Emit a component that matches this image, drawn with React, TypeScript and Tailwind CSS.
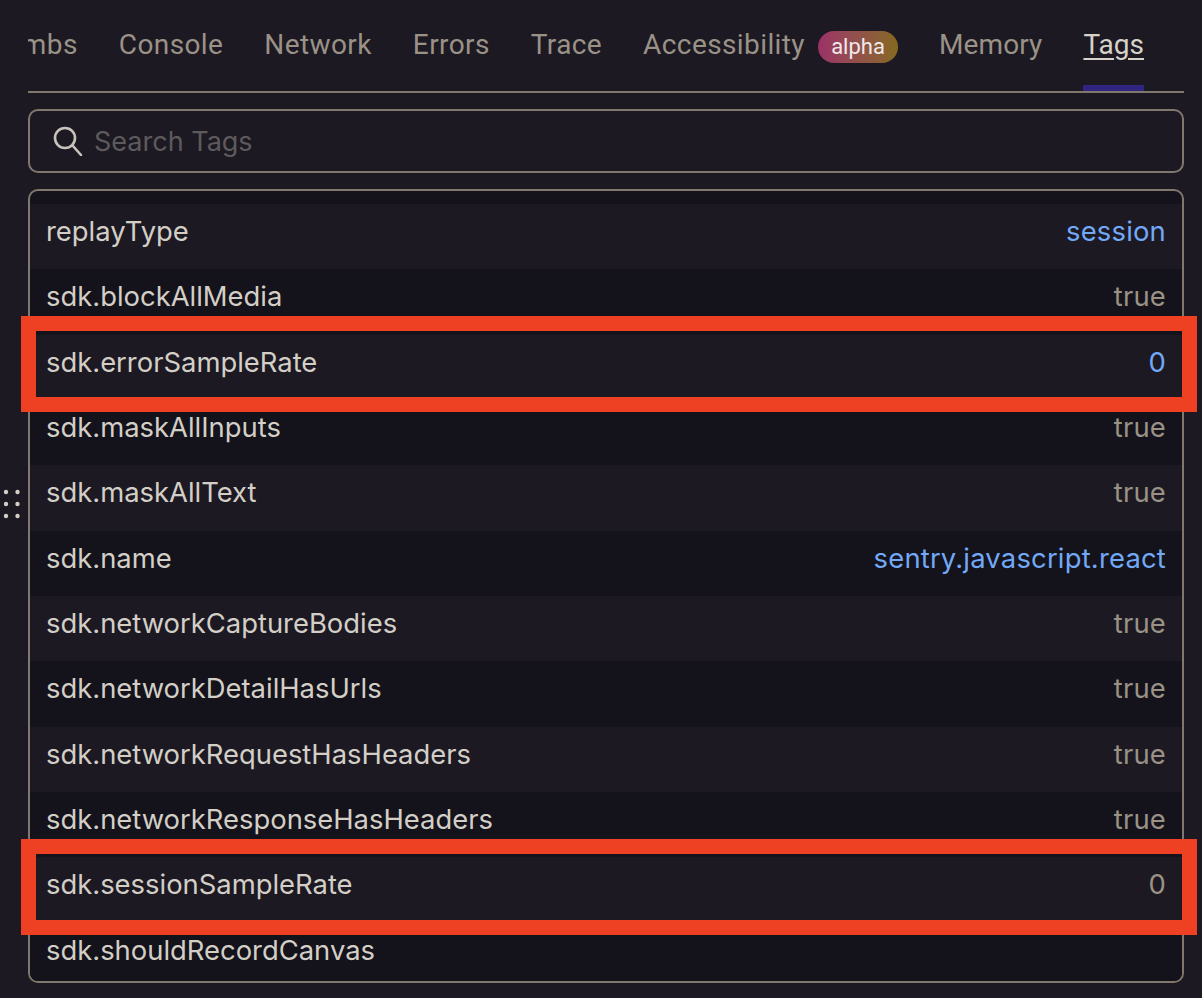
const tabs = ['Breadcrumbs', 'Console', 'Network', 'Errors', 'Trace', 'Accessibility', 'Memory', 'Tags'];

const tags = [
  { name: 'replayType', value: 'session', link: true },
  { name: 'sdk.blockAllMedia', value: 'true' },
  { name: 'sdk.errorSampleRate', value: '0', link: true },
  { name: 'sdk.maskAllInputs', value: 'true' },
  { name: 'sdk.maskAllText', value: 'true' },
  { name: 'sdk.name', value: 'sentry.javascript.react', link: true },
  { name: 'sdk.networkCaptureBodies', value: 'true' },
  { name: 'sdk.networkDetailHasUrls', value: 'true' },
  { name: 'sdk.networkRequestHasHeaders', value: 'true' },
  { name: 'sdk.networkResponseHasHeaders', value: 'true' },
  { name: 'sdk.sessionSampleRate', value: '0' },
  { name: 'sdk.shouldRecordCanvas', value: '' },
];

export default function App() {
  return (
    <div className="relative h-[998px] w-[1202px] overflow-hidden bg-[#1c1923] pl-[28px] pr-[18px] font-['Inter',sans-serif]">
      {/* Tabs */}
      <div className="flex h-[93px] justify-end gap-[41px] overflow-hidden border-b-[2px] border-[#80786c] pr-[40px] font-['Roboto',sans-serif] text-[28px] tracking-[0.4px] text-[#9a9286]">
        {tabs.map((tab) => (
          <div key={tab} className="flex shrink-0 flex-col">
            <div className="flex h-[85px] items-start gap-[13px] pt-[27px] leading-[36px]">
              <span
                className={
                  tab === 'Tags'
                    ? 'tracking-normal text-[#d6d2ca] underline underline-offset-[4px]'
                    : tab === 'Memory'
                      ? 'tracking-[0.1px]'
                      : ''
                }
              >
                {tab}
              </span>
              {tab === 'Accessibility' && (
                <span className="mt-[4px] flex h-[32px] w-[80px] items-center justify-center rounded-full bg-gradient-to-r from-[#9c3066] to-[#85691c] text-[22px] tracking-normal text-[#f0e8ec]">
                  alpha
                </span>
              )}
            </div>
            <div className={tab === 'Tags' ? 'h-[6px] bg-[#2f2580]' : 'h-[6px]'} />
          </div>
        ))}
      </div>

      {/* Search */}
      <div className="mt-[16px] flex h-[64px] items-center gap-[11px] rounded-[10px] border-[2px] border-[#80786c] pl-[23px]">
        <svg width="30" height="30" viewBox="0 0 30 30" fill="none" stroke="#c8c3ba" strokeWidth="2.6" strokeLinecap="round">
          <circle cx="12" cy="12" r="10" />
          <path d="M19.5 19.5 L28 29" />
        </svg>
        <span className="mt-[2px] text-[27px] text-[#5e5a5c]">Search Tags</span>
      </div>

      {/* Tag list */}
      <div className="mt-[16px] h-[794px] overflow-hidden rounded-[10px] border-[2px] border-[#80786c] bg-[#14121a] pt-[13px]">
        {tags.map((tag, i) => (
          <div
            key={tag.name}
            className={`flex h-[65.35px] items-start justify-between pl-[16px] pr-[16px] pt-[9px] text-[27.4px] leading-[36px] ${i % 2 === 0 ? 'bg-[#1c1923]' : 'bg-[#14121a]'}`}
          >
            <span className="text-[#d3cfc7]">{tag.name}</span>
            <span className={tag.link ? 'tracking-[0.2px] text-[#72a9f6]' : 'tracking-[0.2px] text-[#9a9286]'}>{tag.value}</span>
          </div>
        ))}
      </div>

      {/* Drag handle */}
      <svg className="absolute left-[2px] top-[488px]" width="20" height="32" viewBox="0 0 20 32" fill="#d3cfc7">
        <circle cx="4" cy="4" r="2.2" />
        <circle cx="15.5" cy="4" r="2.2" />
        <circle cx="4" cy="16" r="2.2" />
        <circle cx="15.5" cy="16" r="2.2" />
        <circle cx="4" cy="28" r="2.2" />
        <circle cx="15.5" cy="28" r="2.2" />
      </svg>

      {/* Red annotation boxes */}
      <div className="absolute left-[21px] top-[316px] h-[96px] w-[1176px] border-[15px] border-[#ee4123]" />
      <div className="absolute left-[21px] top-[839px] h-[96px] w-[1176px] border-[15px] border-[#ee4123]" />
    </div>
  );
}
